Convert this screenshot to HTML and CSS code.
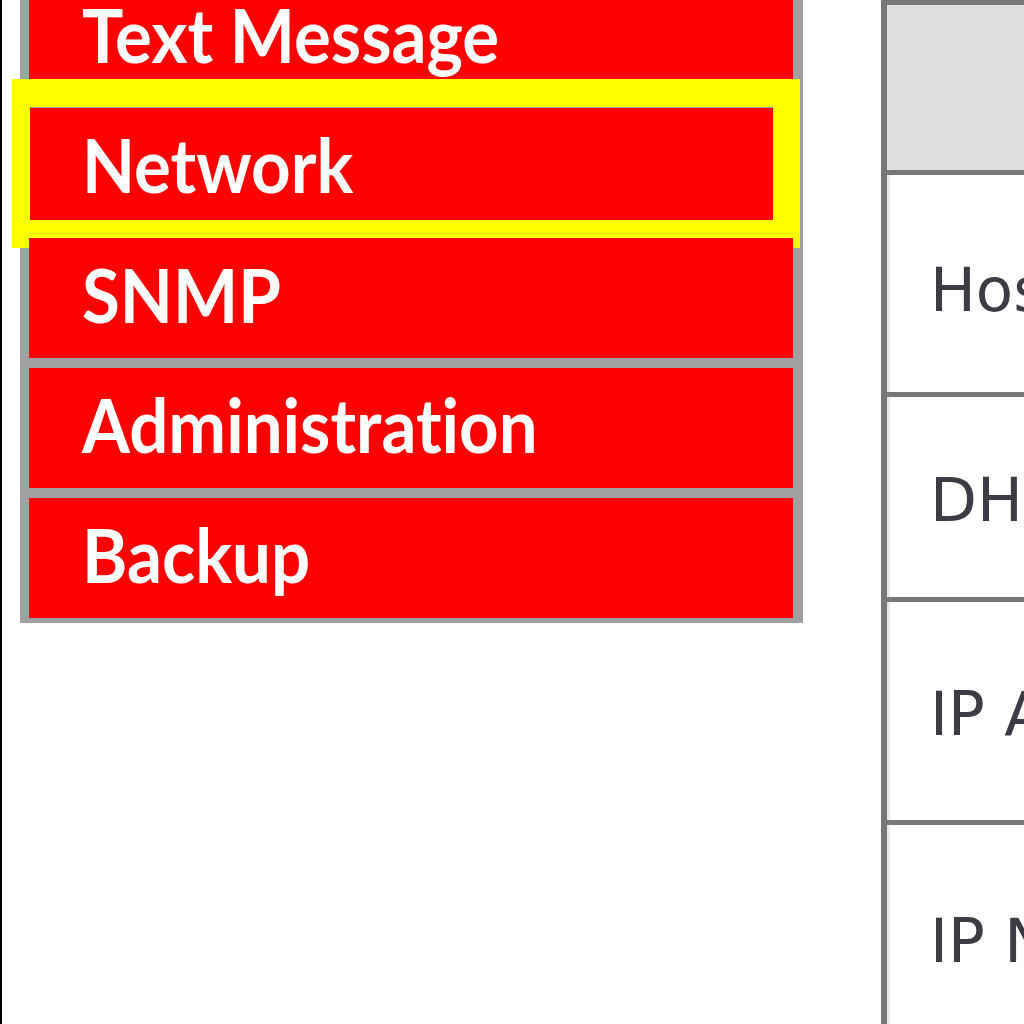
FILE: index.html
```html
<!DOCTYPE html>
<html>
<head>
<meta charset="utf-8">
<link rel="stylesheet" href="styles.css">
</head>
<body>
<div class="page">
  <nav class="menu">
    <div class="item"><span class="txt">Text Message</span></div>
    <div class="item active"><span class="txt">Network</span><span class="focus"></span></div>
    <div class="item"><span class="txt">SNMP</span></div>
    <div class="item"><span class="txt">Administration</span></div>
    <div class="item"><span class="txt">Backup</span></div>
  </nav>
  <div class="table">
    <div class="row head"></div>
    <div class="row r1"><span class="label">Host Name</span></div>
    <div class="row r2"><span class="label">DHCP</span></div>
    <div class="row r3"><span class="label">IP Address</span></div>
    <div class="row r4"><span class="label">IP Netmask</span></div>
  </div>
</div>
</body>
</html>
```
FILE: styles.css
```css
html, body {
  margin: 0;
  padding: 0;
  background: #ffffff;
}
.page {
  width: 1022px;
  height: 1024px;
  overflow: hidden;
  border-left: 2px solid #000;
  display: flex;
  align-items: flex-start;
}
.menu {
  margin-left: 18px;
  margin-top: -22px;
  width: 764px;
  flex: none;
  background: #a0a0a0;
  padding: 0 10px 5px 9px;
  display: flex;
  flex-direction: column;
  gap: 10px;
}
.item {
  height: 120px;
  background: #ff0000;
  color: #ffffff;
  font-family: Lato, "DejaVu Sans", sans-serif;
  font-weight: bold;
  font-size: 75px;
  line-height: 112px;
  padding-left: 53px;
  box-sizing: border-box;
  white-space: nowrap;
  position: relative;
  font-variant-ligatures: none;
}
.txt {
  display: inline-block;
  transform: scaleX(0.92);
  transform-origin: left center;
}
.focus {
  position: absolute;
  top: -29px;
  left: -17px;
  right: -7px;
  bottom: -20px;
  border-style: solid;
  border-color: #ffff00;
  border-width: 28px 27px 28px 18px;
}
.table {
  margin-left: 78px;
  flex: 1;
  border-top: 5px solid #787878;
  border-left: 6px solid #787878;
  min-width: 300px;
}
.row {
  border-bottom: 5px solid #787878;
  box-shadow: inset 3px 0 0 #e8e8e8;
  display: flex;
  align-items: center;
  padding-left: 43px;
  font-family: "DejaVu Sans", Verdana, sans-serif;
  font-size: 61px;
  color: #3c3c44;
  white-space: nowrap;
  overflow: hidden;
  box-sizing: border-box;
}
.head { height: 170px; background: #dedede; box-shadow: none; }
.r1 { height: 222px; padding-top: 12px; }
.r2 { height: 205px; padding-top: 4px; }
.r3 { height: 223px; padding-top: 4px; }
.r4 { height: 235px; }
```
